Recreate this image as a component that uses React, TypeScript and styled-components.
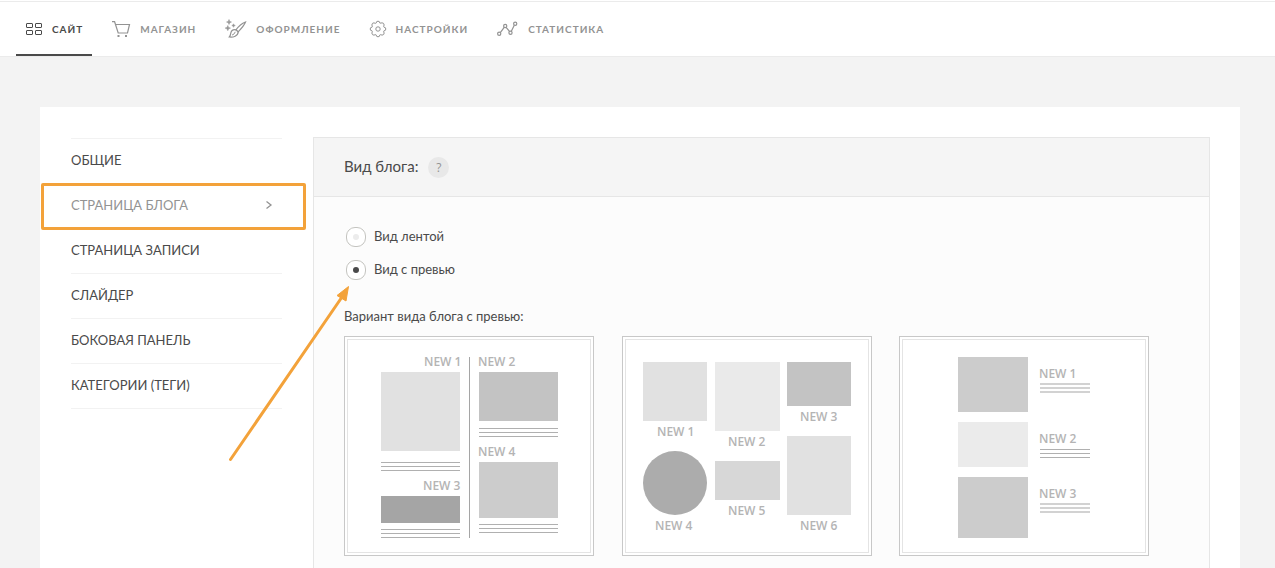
import React from "react";
import styled, { createGlobalStyle } from "styled-components";

const GlobalStyle = createGlobalStyle`
  * { box-sizing: border-box; }
  body {
    margin: 0;
    background: #f3f3f3;
    color: #4a4a4a;
    font-family: Lato, "Noto Sans", sans-serif;
    font-size: 13px;
    line-height: 20px;
  }
`;

const Page = styled.div`
  position: relative;
  min-height: 100vh;
`;

const TopBar = styled.header`
  margin-top: 1px;
  border-top: 1px solid #ebebeb;
  border-bottom: 1px solid #ebebeb;
  background: #fff;
  box-shadow: 0 -1px 0 #fff;
  padding: 0 16px;
`;

const Nav = styled.nav`
  display: flex;
  gap: 10px;
`;

const NavLink = styled.a<{ $active?: boolean }>`
  display: flex;
  align-items: center;
  gap: 10px;
  height: 54px;
  padding: 2px 9px 0 10px;
  border-bottom: 2px solid ${(p) => (p.$active ? "#4a4a4a" : "transparent")};
  color: ${(p) => (p.$active ? "#4a4a4a" : "#939393")};
  font-size: 10px;
  font-weight: 700;
  letter-spacing: 1px;
  text-decoration: none;
  white-space: nowrap;
`;

const Icon = styled.svg`
  flex: none;
  fill: none;
  stroke: currentColor;
  overflow: visible;
`;

const Main = styled.main`
  padding: 50px 35px 0 40px;
`;

const Card = styled.div`
  display: flex;
  align-items: stretch;
  gap: 31px;
  min-height: calc(100vh - 107px);
  padding: 30px 30px 0 31px;
  background: #fff;
`;

const Side = styled.ul`
  flex: 0 0 211px;
  margin: 1px 0 0;
  padding: 0;
  border-top: 1px solid #f2f2f2;
  list-style: none;
`;

const SideItem = styled.li<{ $active?: boolean }>`
  position: relative;
  border-bottom: 1px solid #f2f2f2;
  &::after {
    content: "";
    display: ${(p) => (p.$active ? "block" : "none")};
    position: absolute;
    inset: -1px -24px -2px -30px;
    border: 3px solid #f3a23a;
    border-radius: 2px;
    pointer-events: none;
  }
`;

const SideLink = styled.a<{ $active?: boolean }>`
  display: flex;
  align-items: center;
  justify-content: space-between;
  height: 44px;
  padding: 0 10px 2px 0;
  color: ${(p) => (p.$active ? "#939393" : "#4a4a4a")};
  text-decoration: none;
`;

const Panel = styled.section`
  flex: 1;
  min-width: 0;
  border: 1px solid #e6e6e6;
  border-bottom: 0;
  background: #fcfcfc;
`;

const PanelHead = styled.div`
  display: flex;
  align-items: center;
  gap: 10px;
  height: 59px;
  padding: 0 30px;
  border-bottom: 1px solid #e6e6e6;
  background: #f5f5f5;
`;

const Title = styled.h1`
  margin: 0;
  padding-bottom: 2px;
  font-size: 15px;
  font-weight: 400;
`;

const Help = styled.button`
  width: 21px;
  height: 21px;
  padding: 0;
  border: 0;
  border-radius: 50%;
  background: #e8e8e8;
  color: #939393;
  font: 12px/21px "Open Sans", sans-serif;
`;

const PanelBody = styled.div`
  padding: 30px 30px 12px;
`;

const Options = styled.fieldset`
  display: grid;
  gap: 13px;
  margin: 0 0 26px;
  padding: 0 0 0 2px;
  border: 0;
`;

const Option = styled.label`
  display: flex;
  gap: 8px;
  height: 20px;
  line-height: 18px;
`;

const Radio = styled.input`
  appearance: none;
  display: grid;
  place-items: center;
  width: 20px;
  height: 20px;
  margin: 0;
  border: 1px solid #c4c4c0;
  border-radius: 9px;
  background: #fff;
  &::before {
    content: "";
    width: 6px;
    height: 6px;
    border-radius: 50%;
    background: #ececec;
  }
  &:checked::before { background: #4a4a4a; }
`;

const Caption = styled.p`
  margin: 0 0 10px;
`;

const Variants = styled.div`
  display: flex;
  flex-wrap: wrap;
  justify-content: space-between;
  row-gap: 28px;
  max-width: 805px;
`;

const Variant = styled.button`
  width: 250px;
  height: 220px;
  padding: 2px;
  border: 1px solid #c8c8c8;
  background: #fff;
`;

const Preview = styled.svg`
  display: block;
  width: 244px;
  height: 214px;
  border: 1px solid #e4e4e4;
  fill: #b4b4b4;
  font: 600 12px "Open Sans", sans-serif;
`;

const Pointer = styled.svg`
  position: absolute;
  left: 228px;
  top: 284px;
  pointer-events: none;
`;

const Lines = ({ x, y, w = 79, soft }: { x: number; y: number; w?: number; soft?: boolean }) => (
  <g fill={soft ? "#d2d2d2" : "#b0b0b0"}>
    {[0, 4, 8].map((d) => (
      <rect key={d} x={x} y={y + d} width={w} height={soft ? 2 : 1} />
    ))}
  </g>
);

const SiteIcon = () => (
  <Icon width="16" height="12" viewBox="0 0 16 12">
    <rect x="0.5" y="0.5" width="6" height="4" rx="0.4" />
    <rect x="9.5" y="0.5" width="6" height="4" rx="0.4" />
    <rect x="0.5" y="7.5" width="6" height="4" rx="0.4" />
    <rect x="9.5" y="7.5" width="6" height="4" rx="0.4" />
  </Icon>
);

const CartIcon = () => (
  <Icon width="18" height="16" viewBox="0 0 18 16">
    <path d="M0 .7h2.600l3.600 11.300h9.300l2-8.500H3.500" strokeWidth="1.2" />
    <rect x="5.500" y="14" width="2" height="2" fill="currentColor" stroke="none" />
    <rect x="13" y="14" width="2" height="2" fill="currentColor" stroke="none" />
  </Icon>
);

const BrushIcon = () => (
  <Icon width="21" height="18" viewBox="0 0 21 18">
    <path d="M20.500 2c-3 1.200-7.300 4.800-9.500 7.800l2.200 2c2.800-2.900 6.200-6.800 7.300-9.800z" strokeWidth="1.200" />
    <path d="M11 9.800c-3.200-.6-4.800 1.200-5.200 3.300-.2 1.400-.6 2.800-1.500 3.900 3.700.6 8.900-.9 8.900-5.200" strokeWidth="1.200" />
    <path d="M7 15c1.500-.3 2.700-1.500 3.200-3.200" />
    <path
      d="M4-.5 4.700 1.400 6.500 2 4.700 2.700 4 4.500 3.300 2.700 1.500 2 3.300 1.400zM2.800 5.500l.8 1.900 1.900.7-1.900.7-.8 1.900-.8-1.900-1.900-.7 1.900-.7zM8.500 3.800l.5 1.200 1.300.5-1.300.5-.5 1.300-.5-1.300-1.200-.5 1.200-.5z"
      fill="currentColor"
      strokeWidth="0.500"
    />
  </Icon>
);

const GearIcon = () => (
  <Icon width="16" height="16" viewBox="-8 -8 16 16">
    <path
      d="M-1.300-7.400Q0-8.200 1.300-7.400L1.900-5.900Q2.800-5.700 4-6.200 5.900-6.200 6.200-4L5.600-2.800 6.100-1.700 7.400-1.300Q8.200 0 7.400 1.300L5.900 1.900 5.600 2.800 6.200 4Q6.200 5.900 4 6.200L2.800 5.600 1.700 6.100 1.300 7.400Q0 8.200-1.300 7.400L-1.900 5.900-2.800 5.600-4 6.200Q-5.900 6.200-6.200 4L-5.600 2.800-6.100 1.700-7.400 1.300Q-8.200 0-7.400-1.300L-5.900-1.900-5.600-2.800-6.200-4Q-5.900-6.200-4-6.200L-2.800-5.600-1.700-6.100z"
      strokeLinejoin="round"
    />
    <circle r="2.200" />
  </Icon>
);

const StatsIcon = () => (
  <Icon width="21" height="14" viewBox="0 0 21 14" strokeWidth="1.200">
    <path d="M3.300 10.700 7.200 5.300M9.100 5.400l3.600 4.200M14.300 9.200l3-6" />
    <circle cx="2.200" cy="11.800" r="1.600" />
    <circle cx="8.200" cy="4" r="1.600" />
    <circle cx="13.500" cy="10.700" r="1.600" />
    <circle cx="18.200" cy="1.800" r="1.600" />
  </Icon>
);

const navItems = [
  { label: "САЙТ", icon: <SiteIcon />, active: true },
  { label: "МАГАЗИН", icon: <CartIcon /> },
  { label: "ОФОРМЛЕНИЕ", icon: <BrushIcon /> },
  { label: "НАСТРОЙКИ", icon: <GearIcon /> },
  { label: "СТАТИСТИКА", icon: <StatsIcon /> },
];

const sideItems = [
  "ОБЩИЕ",
  "СТРАНИЦА БЛОГА",
  "СТРАНИЦА ЗАПИСИ",
  "СЛАЙДЕР",
  "БОКОВАЯ ПАНЕЛЬ",
  "КАТЕГОРИИ (ТЕГИ)",
];

const TwoColumnPreview = () => (
  <Preview viewBox="0 0 242 212">
    <rect x="121" y="17" width="1" height="181" fill="#a5a5a5" />
    <text x="76" y="26">NEW 1</text>
    <rect x="33" y="32" width="79" height="79" fill="#e1e1e1" />
    <Lines x={33} y={122} />
    <text x="75" y="150">NEW 3</text>
    <rect x="33" y="156" width="79" height="27" fill="#a5a5a5" />
    <Lines x={33} y={189} />
    <text x="130" y="26">NEW 2</text>
    <rect x="131" y="32" width="79" height="49" fill="#c3c3c3" />
    <Lines x={131} y={88} />
    <text x="130" y="116">NEW 4</text>
    <rect x="131" y="122" width="79" height="56" fill="#ccc" />
    <Lines x={131} y={184} />
  </Preview>
);

const MasonryPreview = () => (
  <Preview viewBox="0 0 242 212">
    <rect x="17" y="22" width="64" height="59" fill="#e1e1e1" />
    <text x="31" y="96">NEW 1</text>
    <rect x="89" y="22" width="65" height="69" fill="#eaeaea" />
    <text x="102" y="106">NEW 2</text>
    <rect x="161" y="22" width="64" height="44" fill="#c3c3c3" />
    <text x="174" y="81">NEW 3</text>
    <circle cx="49" cy="143" r="32" fill="#acacac" />
    <text x="29" y="190">NEW 4</text>
    <rect x="89" y="121" width="65" height="39" fill="#d7d7d7" />
    <text x="102" y="175">NEW 5</text>
    <rect x="161" y="96" width="64" height="79" fill="#e1e1e1" />
    <text x="174" y="190">NEW 6</text>
  </Preview>
);

const ListPreview = () => (
  <Preview viewBox="0 0 242 212">
    <rect x="55" y="17" width="70" height="55" fill="#ccc" />
    <text x="136" y="38">NEW 1</text>
    <Lines x={137} y={43} w={50} soft />
    <rect x="55" y="82" width="70" height="45" fill="#ebebeb" />
    <text x="136" y="103">NEW 2</text>
    <Lines x={137} y={109} w={50} />
    <rect x="55" y="137" width="70" height="61" fill="#ccc" />
    <text x="136" y="158">NEW 3</text>
    <Lines x={137} y={163} w={50} soft />
  </Preview>
);

export default function App() {
  return (
    <Page>
      <GlobalStyle />
      <TopBar>
        <Nav>
          {navItems.map((item) => (
            <NavLink key={item.label} href="#" $active={item.active}>
              {item.icon}
              {item.label}
            </NavLink>
          ))}
        </Nav>
      </TopBar>
      <Main>
        <Card>
          <Side>
            {sideItems.map((label, i) => (
              <SideItem key={label} $active={i === 1}>
                <SideLink href="#" $active={i === 1}>
                  {label}
                  {i === 1 && (
                    <Icon width="6" height="8" viewBox="0 0 6 8">
                      <path d="M.5.500 5 4 .5 7.500" strokeWidth="1.300" />
                    </Icon>
                  )}
                </SideLink>
              </SideItem>
            ))}
          </Side>
          <Panel>
            <PanelHead>
              <Title>Вид блога:</Title>
              <Help type="button">?</Help>
            </PanelHead>
            <PanelBody>
              <Options>
                <Option>
                  <Radio type="radio" name="view" />
                  Вид лентой
                </Option>
                <Option>
                  <Radio type="radio" name="view" defaultChecked />
                  Вид с превью
                </Option>
              </Options>
              <Caption>Вариант вида блога с превью:</Caption>
              <Variants>
                <Variant type="button" aria-label="NEW 1 – NEW 4"><TwoColumnPreview /></Variant>
                <Variant type="button" aria-label="NEW 1 – NEW 6"><MasonryPreview /></Variant>
                <Variant type="button" aria-label="NEW 1 – NEW 3"><ListPreview /></Variant>
              </Variants>
            </PanelBody>
          </Panel>
        </Card>
      </Main>
      <Pointer width="124" height="178" viewBox="0 0 124 178">
        <path d="M2.500 174.500 114 12" stroke="#f3a23a" strokeWidth="3" strokeLinecap="round" />
        <path d="M120.500 1.500 109 10.500 118 16z" fill="#f3a23a" stroke="#f3a23a" />
      </Pointer>
    </Page>
  );
}
